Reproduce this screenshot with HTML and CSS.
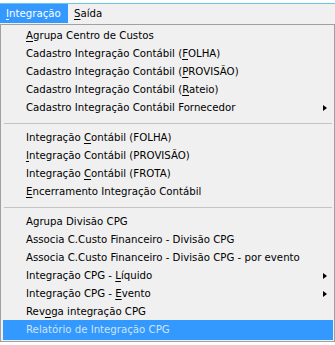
FILE: index.html
```html
<!DOCTYPE html>
<html lang="pt-BR">

<head>
    <meta charset="UTF-8">
    <title>Integração</title>
    <link rel="stylesheet" href="styles.css">
</head>

<body>

    <!-- Main menu bar -->
    <div class="menubar">
        <div class="menu-title open"><u>I</u>ntegração</div>
        <div class="menu-title"><u>S</u>aída</div>
    </div>

    <!-- Dropdown for Integração -->
    <div class="popup">
        <div class="item"><u>A</u>grupa Centro de Custos</div>
        <div class="item">Cadastro Integração Contábil (<u>F</u>OLHA)</div>
        <div class="item">Cadastro Integração Contábil (<u>P</u>ROVISÃO)</div>
        <div class="item">Cadastro Integração Contábil (<u>R</u>ateio)</div>
        <div class="item sub">Cadastro Integração Contábil Fornecedor</div>

        <div class="sep"></div>

        <div class="item">Integração <u>C</u>ontábil (FOLHA)</div>
        <div class="item"><u>I</u>ntegração Contábil (PROVISÃO)</div>
        <div class="item">Integração <u>C</u>ontábil (FROTA)</div>
        <div class="item"><u>E</u>ncerramento Integração Contábil</div>

        <div class="sep"></div>

        <div class="item">Agrupa Divisão CPG</div>
        <div class="item">Associa C.Custo Financeiro - Divisão CPG</div>
        <div class="item">Associa C.Custo Financeiro - Divisão CPG - por evento</div>
        <div class="item sub">Integração CPG - <u>L</u>íquido</div>
        <div class="item sub">Integração CPG - <u>E</u>vento</div>
        <div class="item">Rev<u>o</u>ga integração CPG</div>
        <div class="item selected">Relatório de Integração CPG</div>
    </div>

</body>

</html>
```

FILE: styles.css
```css
body {
    margin: 0;
    background-color: #ffffff;
    font-family: "DejaVu Sans", sans-serif;
    font-size: 10.2px;
    color: #000;
}

u {
    text-decoration: underline;
    text-underline-offset: 2px;
}

/* Menu bar */
.menubar {
    margin-top: 3px;
    border-top: 1px solid #67c7ea;
    background-color: #f0f0f0;
    height: 20px;
    display: flex;
}

.menu-title {
    padding: 0 6px;
    line-height: 19px;
}

.menu-title.open {
    width: 56px;
    height: 19px;
    background-color: #3399ff;
    color: #ffffff;
}

/* Dropdown */
.popup {
    width: 333px;
    border: 1px solid #a0a0a0;
    background-color: #f0f0f0;
    padding: 2px 0 1px;
}

.item {
    height: 18px;
    line-height: 18px;
    margin: 0 1px 0 2px;
    padding-left: 23px;
    position: relative;
    white-space: nowrap;
}

/* Submenu arrow */
.item.sub::after {
    content: "";
    position: absolute;
    right: 6px;
    top: 6px;
    border-left: 4px solid #000;
    border-top: 3.5px solid transparent;
    border-bottom: 3.5px solid transparent;
}

.item.selected {
    height: 20px;
    line-height: 20px;
    margin-top: -1px;
    background-color: #3399ff;
    color: #cfe3f7;
}

.sep {
    height: 1px;
    margin: 6px 2px 5px 3px;
    background-color: #c4c4c4;
}
```
